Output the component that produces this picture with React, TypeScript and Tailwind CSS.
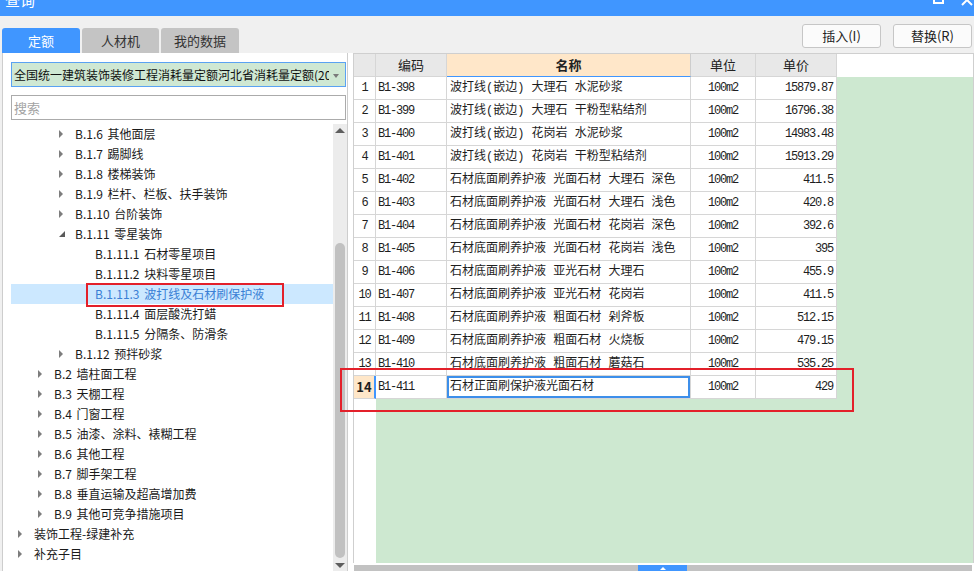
import { FC } from 'react'

type TreeNode = { t: string; l: number; s?: 'r' | 'd'; sel?: boolean }

const TREE: TreeNode[] = [
  { t: 'B.1.6 其他面层', l: 2, s: 'r' },
  { t: 'B.1.7 踢脚线', l: 2, s: 'r' },
  { t: 'B.1.8 楼梯装饰', l: 2, s: 'r' },
  { t: 'B.1.9 栏杆、栏板、扶手装饰', l: 2, s: 'r' },
  { t: 'B.1.10 台阶装饰', l: 2, s: 'r' },
  { t: 'B.1.11 零星装饰', l: 2, s: 'd' },
  { t: 'B.1.11.1 石材零星项目', l: 3 },
  { t: 'B.1.11.2 块料零星项目', l: 3 },
  { t: 'B.1.11.3 波打线及石材刷保护液', l: 3, sel: true },
  { t: 'B.1.11.4 面层酸洗打蜡', l: 3 },
  { t: 'B.1.11.5 分隔条、防滑条', l: 3 },
  { t: 'B.1.12 预拌砂浆', l: 2, s: 'r' },
  { t: 'B.2 墙柱面工程', l: 1, s: 'r' },
  { t: 'B.3 天棚工程', l: 1, s: 'r' },
  { t: 'B.4 门窗工程', l: 1, s: 'r' },
  { t: 'B.5 油漆、涂料、裱糊工程', l: 1, s: 'r' },
  { t: 'B.6 其他工程', l: 1, s: 'r' },
  { t: 'B.7 脚手架工程', l: 1, s: 'r' },
  { t: 'B.8 垂直运输及超高增加费', l: 1, s: 'r' },
  { t: 'B.9 其他可竞争措施项目', l: 1, s: 'r' },
  { t: '装饰工程-绿建补充', l: 0, s: 'r' },
  { t: '补充子目', l: 0, s: 'r' },
]

const INDENT = ['pl-[7px]', 'pl-[27px]', 'pl-[48px]', 'pl-[68px]']

const ROWS: [string, string, string][] = [
  ['B1-398', '波打线(嵌边) 大理石 水泥砂浆', '15879.87'],
  ['B1-399', '波打线(嵌边) 大理石 干粉型粘结剂', '16796.38'],
  ['B1-400', '波打线(嵌边) 花岗岩 水泥砂浆', '14983.48'],
  ['B1-401', '波打线(嵌边) 花岗岩 干粉型粘结剂', '15913.29'],
  ['B1-402', '石材底面刷养护液 光面石材 大理石 深色', '411.5'],
  ['B1-403', '石材底面刷养护液 光面石材 大理石 浅色', '420.8'],
  ['B1-404', '石材底面刷养护液 光面石材 花岗岩 深色', '392.6'],
  ['B1-405', '石材底面刷养护液 光面石材 花岗岩 浅色', '395'],
  ['B1-406', '石材底面刷养护液 亚光石材 大理石', '455.9'],
  ['B1-407', '石材底面刷养护液 亚光石材 花岗岩', '411.5'],
  ['B1-408', '石材底面刷养护液 粗面石材 剁斧板', '512.15'],
  ['B1-409', '石材底面刷养护液 粗面石材 火烧板', '479.15'],
  ['B1-410', '石材底面刷养护液 粗面石材 蘑菇石', '535.25'],
  ['B1-411', '石材正面刷保护液光面石材', '429'],
]

const cell = 'h-full border-r border-b border-[#d6d6d6] flex items-center shrink-0'
const mono = "[font-family:'Liberation_Mono','Noto_Sans_CJK_SC',monospace] text-[12px] tracking-[-1.2px]"

const App: FC = () => {
  return (
    <div className="relative w-[974px] h-[571px] overflow-hidden bg-[#f0f0f0] text-[#1e1e1e] [font-family:'Noto_Sans_CJK_SC','Noto_Sans',sans-serif]">
      {/* title bar, top half cut off */}
      <div className="relative h-[16px] bg-[#4096ff] overflow-hidden">
        <div className="absolute left-[5px] top-[-10px] text-[15px] leading-[20px] text-white">查询</div>
        <div className="absolute left-[933px] top-[-7px] w-[11px] h-[11px] border-2 border-white" />
        <svg className="absolute left-[961px] top-[-6px]" width="12" height="12" viewBox="0 0 12 12">
          <path d="M1 1 L11 11 M11 1 L1 11" stroke="#fff" strokeWidth="2" />
        </svg>
      </div>

      {/* tabs + buttons */}
      <div className="h-[37px] flex justify-between">
        <div className="flex items-end gap-[2px] pl-[2px]">
          <div className="w-[78px] h-[25px] rounded-t-[3px] bg-[#4096ff] text-white text-[13px] flex items-center justify-center">定额</div>
          <div className="w-[77px] h-[25px] rounded-t-[3px] bg-[#c4c4c4] text-[13px] text-[#333] flex items-center justify-center">人材机</div>
          <div className="w-[78px] h-[25px] rounded-t-[3px] bg-[#c4c4c4] text-[13px] text-[#333] flex items-center justify-center">我的数据</div>
        </div>
        <div className="flex gap-[12px] pr-[2px] pt-[8px]">
          <button className="w-[79px] h-[24px] border border-[#c6c6c6] rounded-[3px] bg-[#fbfbfb] text-[13px] text-[#222]">插入(I)</button>
          <button className="w-[79px] h-[24px] border border-[#c6c6c6] rounded-[3px] bg-[#fbfbfb] text-[13px] text-[#222]">替换(R)</button>
        </div>
      </div>

      <div className="flex h-[518px]">
        {/* left panel */}
        <div className="ml-[2px] w-[346px] h-full bg-white border-x border-[#cdcdcd] flex flex-col pl-[8px]">
          <div className="mt-[9px] h-[25px] w-[335px] border border-[#5aa2f2] bg-[#cfe8d3] flex items-center pl-[2px] pr-[16px] relative">
            <div className="text-[12px] leading-[16px] whitespace-nowrap overflow-hidden text-[#111]">全国统一建筑装饰装修工程消耗量定额河北省消耗量定额(2012)</div>
            <div className="absolute right-[6px] top-[11px] w-0 h-0 border-x-[3px] border-x-transparent border-t-[4px] border-t-[#7a7a7a]" />
          </div>
          <div className="mt-[8px] h-[25px] w-[335px] border border-[#ababab] bg-white flex items-center pl-[2px] text-[13px] text-[#a3a3a3]">搜索</div>
          <div className="mt-[4px] flex-1 flex min-h-0">
            <div className="w-[322px] overflow-hidden">
              {TREE.map((n) => (
                <div
                  key={n.t}
                  className={`h-[20px] flex items-center text-[12px] leading-[20px] whitespace-nowrap [word-spacing:2px] ${INDENT[n.l]} ${n.sel ? 'bg-[#cce8ff] text-[#3a7fd5]' : 'text-[#1a1a1a]'}`}
                >
                  <div className="w-[16px] shrink-0 flex items-center">
                    {n.s === 'r' && (
                      <div className="w-0 h-0 border-y-[4px] border-y-transparent border-l-[4px] border-l-[#7d7d7d]" />
                    )}
                    {n.s === 'd' && (
                      <svg width="6" height="6" viewBox="0 0 6 6">
                        <path d="M6 0 L6 6 L0 6 Z" fill="#5a5a5a" />
                      </svg>
                    )}
                  </div>
                  <span>{n.t}</span>
                </div>
              ))}
            </div>
            <div className="w-[14px] bg-[#ececec] flex flex-col items-center">
              <div className="h-[13px] flex items-center">
                <div className="w-0 h-0 border-x-[5px] border-x-transparent border-b-[5px] border-b-[#5e5e5e]" />
              </div>
              <div className="mt-[106px] w-[10px] h-[315px] rounded-full bg-[#c1c1c1]" />
              <div className="mt-auto h-[12px] flex items-center">
                <div className="w-0 h-0 border-x-[5px] border-x-transparent border-t-[5px] border-t-[#5e5e5e]" />
              </div>
            </div>
          </div>
        </div>

        {/* right panel */}
        <div className="flex-1 h-full bg-white pl-[5px] flex flex-col">
          <div className="flex-1 flex flex-col border-t border-l border-r border-[#cfcfcf] min-h-0">
            <div className="h-[23px] flex text-[13px] text-[#222]">
              <div className={`${cell} w-[22px] bg-[#e8e8e8] border-[#cdcdcd]`} />
              <div className={`${cell} w-[71px] bg-[#e8e8e8] border-[#cdcdcd] justify-center`}>编码</div>
              <div className={`${cell} w-[244px] bg-[#ffe7c9] border-r-[#cdcdcd] border-b-[#4096ff] justify-center font-bold`}>名称</div>
              <div className={`${cell} w-[65px] bg-[#e8e8e8] border-[#cdcdcd] justify-center`}>单位</div>
              <div className={`${cell} w-[81px] bg-[#e8e8e8] border-[#cdcdcd] justify-center`}>单价</div>
              <div className="flex-1 bg-white" />
            </div>
            {ROWS.map(([code, name, price], i) => {
              const sel = i === 13
              return (
                <div key={code} className="h-[23px] flex">
                  <div
                    className={`${cell} w-[22px] justify-center ${sel ? 'bg-[#ffe7c9] border-r-2 border-r-[#4096ff] font-bold text-[13px] [font-family:\'Liberation_Serif\',serif]' : `bg-white ${mono}`}`}
                  >
                    {i + 1}
                  </div>
                  <div className={`${cell} w-[71px] pl-[2px] bg-white ${mono}`}>{code}</div>
                  <div className={`${cell} w-[244px] bg-white`}>
                    <div
                      className={`h-full w-full flex items-center pl-[1px] whitespace-nowrap overflow-hidden text-[12px] [font-family:'Liberation_Mono','Noto_Sans_CJK_SC',monospace] ${sel ? 'border-2 border-[#3d8fea]' : 'border-2 border-transparent'}`}
                    >
                      {name}
                    </div>
                  </div>
                  <div className={`${cell} w-[65px] justify-center bg-white ${mono}`}>100m2</div>
                  <div className={`${cell} w-[81px] justify-end pr-[3px] bg-white ${mono}`}>{price}</div>
                  <div className="flex-1 bg-[#cde8d0]" />
                </div>
              )
            })}
            <div className="flex-1 flex">
              <div className="w-[22px] bg-white" />
              <div className="flex-1 bg-[#cde8d0]" />
            </div>
          </div>
          <div className="mt-[2px] h-[6px] ml-[1px] mr-[2px] bg-[#c2c2c2] relative">
            <div className="absolute left-[284px] top-0 w-[49px] h-[6px] bg-[#4096ff] flex items-center justify-center">
              <div className="w-0 h-0 border-x-[3px] border-x-transparent border-b-[3px] border-b-white" />
            </div>
          </div>
        </div>
      </div>

      {/* red annotation boxes */}
      <div className="absolute left-[86px] top-[283px] w-[198px] h-[24px] border-2 border-[#e3202a]" />
      <div className="absolute left-[340px] top-[368px] w-[514px] h-[44px] border-2 border-[#e3202a]" />
    </div>
  )
}

export default App
